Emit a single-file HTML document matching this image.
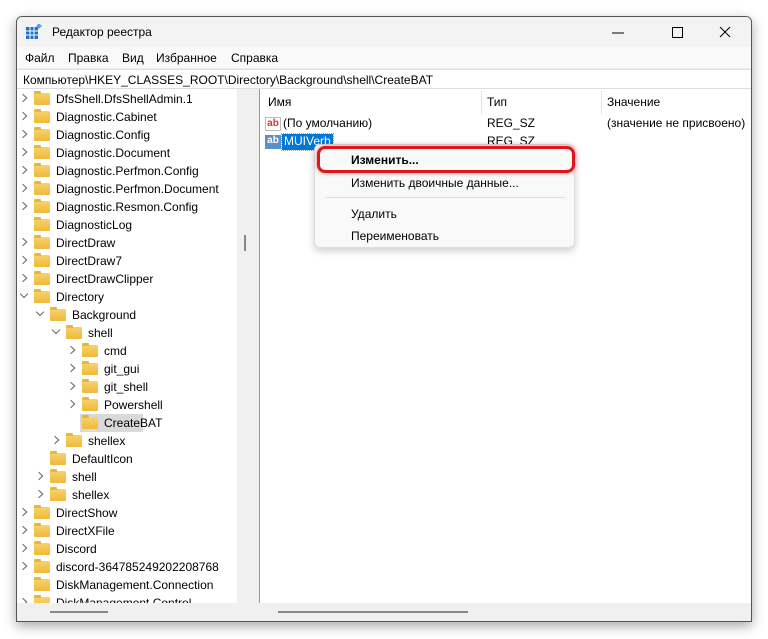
<!DOCTYPE html><html><head><meta charset="utf-8"><style>
*{margin:0;padding:0;box-sizing:border-box}
body{width:768px;height:639px;background:#fff;font-family:"Liberation Sans","DejaVu Sans",sans-serif;font-size:12px;color:#000;position:relative;overflow:hidden}
.win{position:absolute;left:16px;top:16px;width:736px;height:606px;background:#f0f0f0;border:1px solid #555;border-radius:6px 6px 0 0;box-shadow:0 4px 12px rgba(0,0,0,.35);overflow:hidden}
.title{position:absolute;left:0;top:0;width:100%;height:30px;background:#f3f3f3}
.title .t{position:absolute;left:35px;top:8px;font-size:12px}
.menu{position:absolute;top:30px;left:0;width:100%;height:21px;background:#f9f9f9}
.menu span{position:absolute;top:4px}
.addr{position:absolute;top:52px;left:0;width:100%;height:20px;background:#fff;border-top:1px solid #ddd;border-bottom:1px solid #ddd;padding:3px 6px;white-space:nowrap}
.left{position:absolute;left:0;top:72px;width:236px;height:514px;background:#fff;overflow:hidden;border-right:1px solid #ccc}
.lsb{position:absolute;left:220px;top:72px;width:16px;height:514px;background:#f0f0f0}
.right{position:absolute;left:242px;top:72px;width:494px;height:514px;background:#fff;border-left:1px solid #999;overflow:hidden}
.hb{position:absolute;top:586px;height:19px;background:#f0f0f0}
.row{position:absolute;height:18px;white-space:nowrap;font-size:12px}
.f{position:absolute;width:16px;height:12px;top:3px;background:linear-gradient(#f7d36a,#f0b93a);border-radius:1px}
.f:before{content:"";position:absolute;left:0;top:-2px;width:7px;height:3px;background:#e9b440;border-radius:1px 1px 0 0}
.ch{position:absolute;top:5px;width:6px;height:6px;border-right:1px solid #666;border-bottom:1px solid #666;transform:rotate(-45deg)}
.chd{transform:rotate(45deg);top:3px}
.tx{position:absolute;top:2px}
.ico{position:absolute;width:16px;height:14px;font-size:10px;font-weight:bold;color:#fff;line-height:12px;text-align:center}
</style></head><body>
<div class="win">
<div class="title">
<svg style="position:absolute;left:9px;top:7px" width="16" height="16"><rect x="0" y="3" width="12" height="12" fill="#1e6fc7"/><path d="M4 3v12M8 3v12M0 7h12M0 11h12" stroke="#fff" stroke-width="1"/><rect x="11" y="0" width="4" height="4" fill="#4aa3f0" transform="rotate(45 13 2)"/></svg>
<span class="t">Редактор реестра</span>
<svg style="position:absolute;left:595px;top:9px" width="130" height="14"><path d="M0 7h12" stroke="#000"/><rect x="60.5" y="1.5" width="10" height="10" fill="none" stroke="#000"/><path d="M108 1l10 10M118 1l-10 10" stroke="#000"/></svg>
</div>
<div class="menu"><span style="left:8px">Файл</span><span style="left:51px">Правка</span><span style="left:105px">Вид</span><span style="left:139px">Избранное</span><span style="left:214px">Справка</span></div>
<div class="addr">Компьютер\HKEY_CLASSES_ROOT\Directory\Background\shell\CreateBAT</div>
<div class="left" id="tree"></div>
<div class="lsb"><div style="position:absolute;left:7px;top:146px;width:2px;height:16px;background:#888"></div></div>
<div class="right">
<div class="row" style="left:8px;top:6px">Имя</div><div style="position:absolute;left:221px;top:2px;width:1px;height:24px;background:#e5e5e5"></div>
<div class="row" style="left:227px;top:6px">Тип</div><div style="position:absolute;left:341px;top:2px;width:1px;height:24px;background:#e5e5e5"></div>
<div class="row" style="left:347px;top:6px">Значение</div>
<div class="ico" style="left:5px;top:28px;background:#fff;border:1px solid #bbb;color:#d33">ab</div>
<div class="row" style="left:23px;top:27px">(По умолчанию)</div><div class="row" style="left:227px;top:27px">REG_SZ</div><div class="row" style="left:347px;top:27px">(значение не присвоено)</div>
<div class="ico" style="left:5px;top:46px;background:#5b8fc7">ab</div>
<div class="row" style="left:22px;top:45px;background:#0078d7;color:#fff;padding:0 2px;height:16px;outline:1px dotted #f90">MUIVerb</div><div class="row" style="left:227px;top:45px">REG_SZ</div>
<div style="position:absolute;left:17px;top:531px;width:202px;height:2px;background:#888"></div>
</div>
<div class="hb" style="left:0;width:236px"><div style="position:absolute;left:33px;top:8px;width:58px;height:2px;background:#888"></div></div>
<div class="hb" style="left:243px;width:493px"><div style="position:absolute;left:18px;top:8px;width:190px;height:2px;background:#888"></div></div>
</div>
<div style="position:absolute;left:314px;top:144px;width:261px;height:104px;background:#f9f9f9;border:1px solid #ddd;border-radius:6px;box-shadow:0 3px 8px rgba(0,0,0,.2)">
<div style="position:absolute;left:36px;top:8px;font-weight:bold">Изменить...</div>
<div style="position:absolute;left:36px;top:31px">Изменить двоичные данные...</div>
<div style="position:absolute;left:10px;top:52px;width:240px;height:1px;background:#ddd"></div>
<div style="position:absolute;left:36px;top:62px">Удалить</div>
<div style="position:absolute;left:36px;top:84px">Переименовать</div>
</div>
<div style="position:absolute;left:317px;top:146px;width:258px;height:27px;border:3px solid #e0141c;border-radius:8px;box-shadow:0 0 4px rgba(200,0,0,.5)"></div>
<script>
var items=[[0,1,"DfsShell.DfsShellAdmin.1"],[0,1,"Diagnostic.Cabinet"],[0,1,"Diagnostic.Config"],[0,1,"Diagnostic.Document"],[0,1,"Diagnostic.Perfmon.Config"],[0,1,"Diagnostic.Perfmon.Document"],[0,1,"Diagnostic.Resmon.Config"],[0,0,"DiagnosticLog"],[0,1,"DirectDraw"],[0,1,"DirectDraw7"],[0,1,"DirectDrawClipper"],[0,2,"Directory"],[1,2,"Background"],[2,2,"shell"],[3,1,"cmd"],[3,1,"git_gui"],[3,1,"git_shell"],[3,1,"Powershell"],[3,0,"CreateBAT"],[2,1,"shellex"],[1,0,"DefaultIcon"],[1,1,"shell"],[1,1,"shellex"],[0,1,"DirectShow"],[0,1,"DirectXFile"],[0,1,"Discord"],[0,1,"discord-364785249202208768"],[0,0,"DiskManagement.Connection"],[0,1,"DiskManagement.Control"]];
var h="";items.forEach(function(it,i){var y=1+i*18,x=16*it[0];var ch=it[1]==1?'<div class="ch" style="left:'+(x+3)+'px"></div>':it[1]==2?'<div class="ch chd" style="left:'+(x+4)+'px"></div>':'';var sel=it[2]=="CreateBAT"?'<div style="position:absolute;left:'+(x+15)+'px;top:0;width:63px;height:18px;background:#d9d9d9"></div>':'';h+='<div class="row" style="left:0;top:'+y+'px;width:236px">'+sel+ch+'<div class="f" style="left:'+(x+17)+'px"></div><span class="tx" style="left:'+(x+39)+'px">'+it[2]+'</span></div>';});
document.getElementById("tree").innerHTML=h;
</script>
</body></html>
